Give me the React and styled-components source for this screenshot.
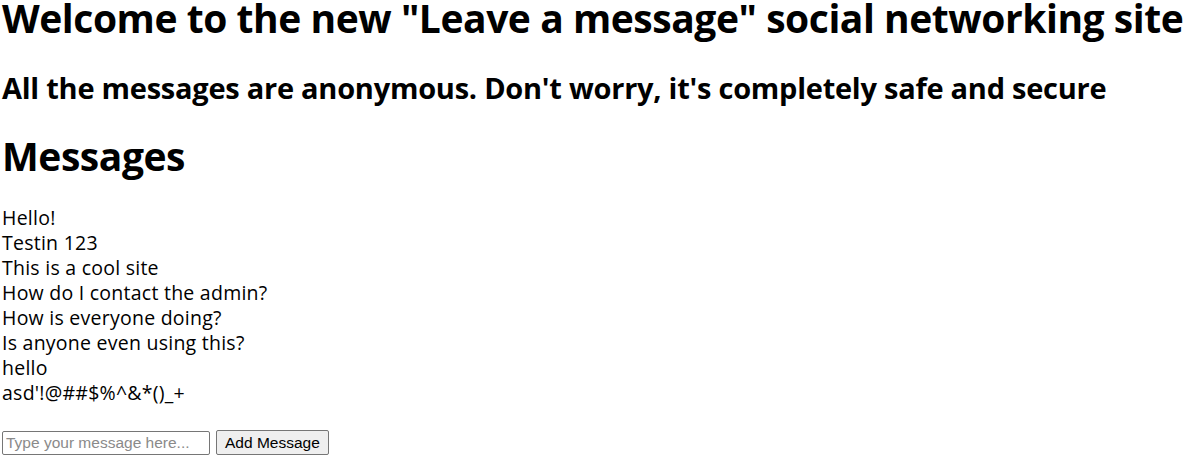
import React, { useState } from 'react';
import styled, { createGlobalStyle } from 'styled-components';

const GlobalStyle = createGlobalStyle`
  body {
    margin: 0;
    background: #fff;
    color: #000;
    font-family: "Open Sans", "Noto Sans", sans-serif;
  }
`;

const initialMessages = [
  'Hello!',
  'Testin 123',
  'This is a cool site',
  'How do I contact the admin?',
  'How is everyone doing?',
  'Is anyone even using this?',
  'hello',
  "asd'!@##$%^&*()_+",
];

function App() {
  const [messages, setMessages] = useState(initialMessages);
  const [text, setText] = useState('');

  const addMessage = (e) => {
    e.preventDefault();
    if (!text) return;
    setMessages([...messages, text]);
    setText('');
  };

  return (
    <Page>
      <GlobalStyle />
      <Title>Welcome to the new "Leave a message" social networking site</Title>
      <SubTitle>All the messages are anonymous. Don't worry, it's completely safe and secure</SubTitle>
      <Title $gap>Messages</Title>
      <MessageList>
        {messages.map((m, i) => (
          <Message key={i}>{m}</Message>
        ))}
      </MessageList>
      <Form onSubmit={addMessage}>
        <input
          type="text"
          placeholder="Type your message here..."
          value={text}
          onChange={(e) => setText(e.target.value)}
        />
        <button type="submit">Add Message</button>
      </Form>
    </Page>
  );
}

const Page = styled.div`
  padding: 0 0 0 2px;
  display: flex;
  flex-direction: column;
`;

const Title = styled.h1`
  margin: ${(p) => (p.$gap ? '34px' : '0')} 0 0;
  font-size: 39px;
  line-height: 36px;
  font-weight: 700;
  letter-spacing: -0.45px;
  white-space: nowrap;
`;

const SubTitle = styled.h2`
  margin: 36px 0 0;
  font-size: 29px;
  line-height: 32px;
  font-weight: 700;
  letter-spacing: -0.25px;
  white-space: nowrap;
`;

const MessageList = styled.div`
  margin-top: 31px;
  display: flex;
  flex-direction: column;
`;

const Message = styled.div`
  font-size: 19.5px;
  line-height: 25px;
  letter-spacing: 0.25px;
`;

const Form = styled.form`
  margin-top: 25px;
  display: flex;
  align-items: center;
  gap: 6px;

  input {
    width: 208px;
    height: 24px;
    box-sizing: border-box;
    padding: 1px 3px;
    border: 1px solid #767676;
    border-radius: 2px;
    font-family: "Liberation Sans", Arial, sans-serif;
    font-size: 15.5px;
    color: #000;

    &::placeholder {
      color: #8a8a8a;
    }
  }

  button {
    height: 25px;
    padding: 0 8px;
    border: 1px solid #767676;
    border-radius: 2px;
    background: #efefef;
    font-family: "Liberation Sans", Arial, sans-serif;
    font-size: 15.5px;
    color: #000;
  }
`;

export default App;
